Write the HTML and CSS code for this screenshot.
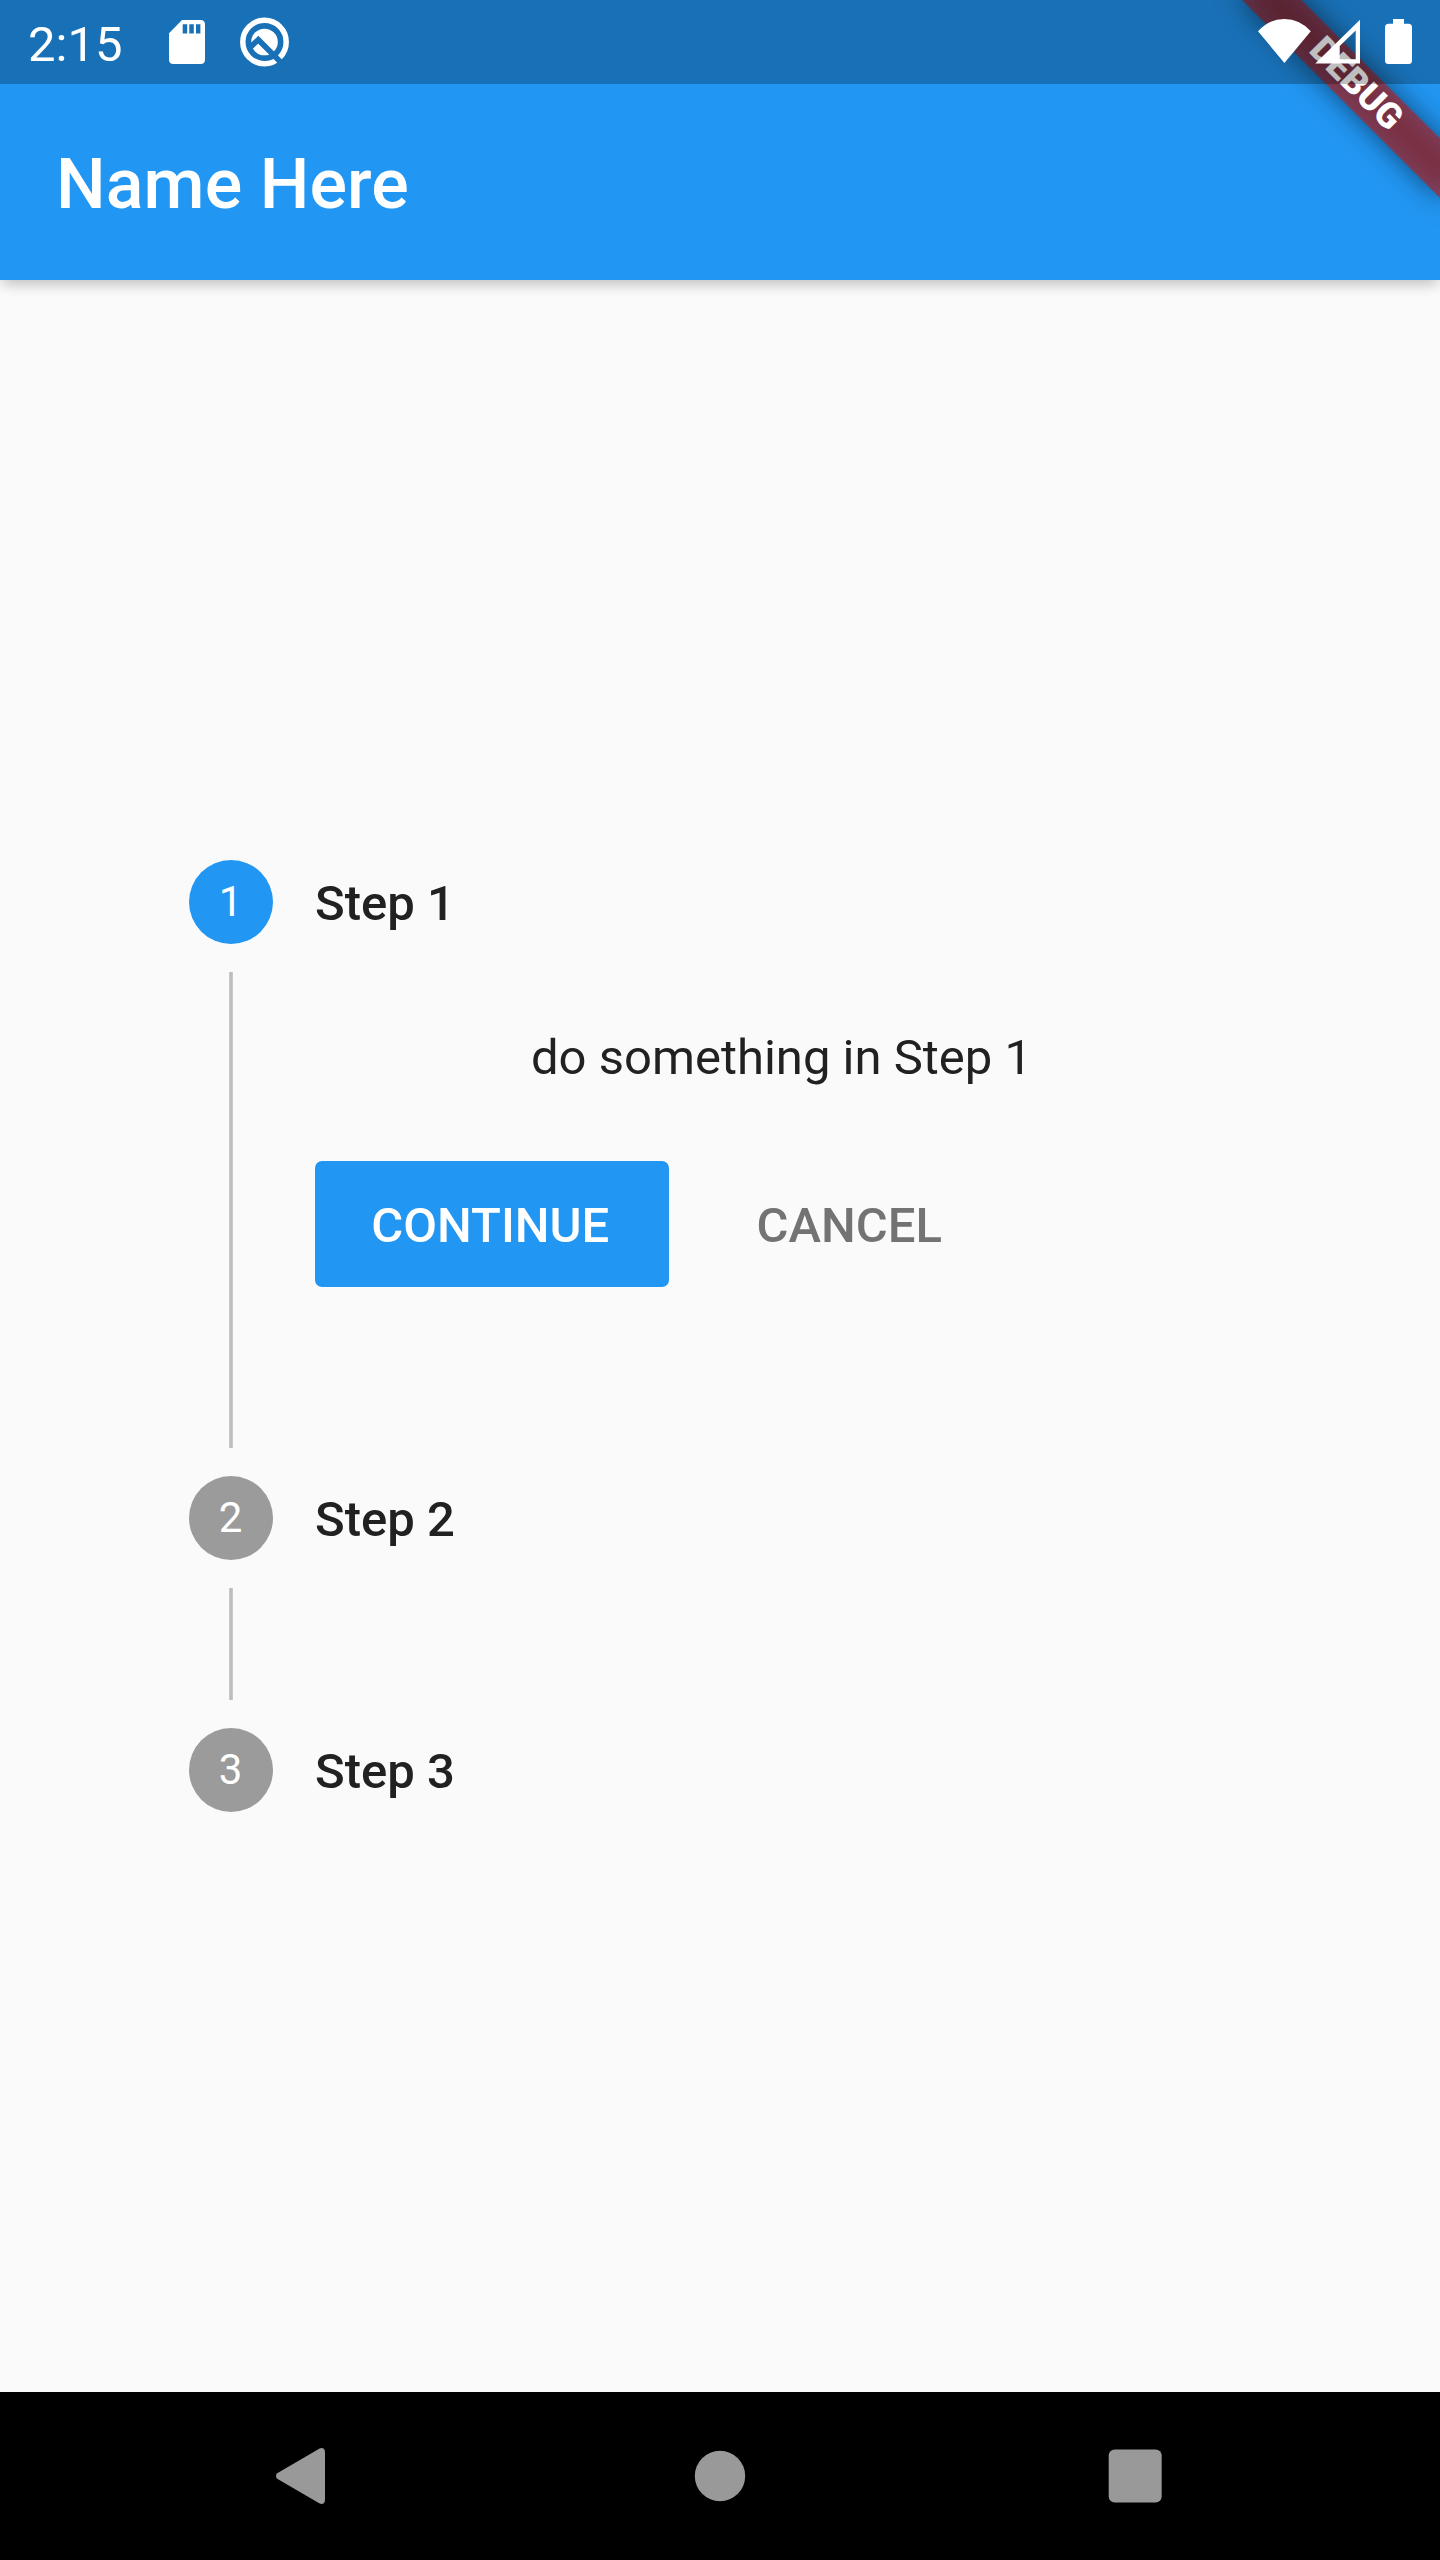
FILE: index.html
```html
<!DOCTYPE html>
<html lang="en">
<head>
<meta charset="utf-8">
<title>Name Here</title>
<link rel="stylesheet" href="styles.css">
</head>
<body>
<div class="screen">
  <div class="status-bar">
    <span class="clock">2:15</span>
    <svg class="icon-sd" width="36" height="44" viewBox="0 0 36 44"><path fill="#fff" fill-rule="evenodd" d="M13 0H31.500Q36 0 36 4.500V39.500Q36 44 31.500 44H4.500Q0 44 0 39.500V13.200ZM13.700 4.200V13.400H18.200V4.200ZM20.300 4.200V13.400H24.800V4.200ZM27 4.200V13.400H31.400V4.200Z"/></svg>
    <svg class="icon-q" width="50" height="50" viewBox="0 0 50 50">
      <circle cx="24.500" cy="25" r="21.700" fill="none" stroke="#fff" stroke-width="5.500"/>
      <circle cx="24.500" cy="25" r="13.300" fill="#fff"/>
      <path d="M10.500 30L18.300 22.700L41.500 46" fill="none" stroke="#1970b6" stroke-width="5.600"/>
    </svg>
    <svg class="icons-right" width="156" height="46" viewBox="0 0 156 46">
      <path fill="#fff" d="M0 12.300Q11 0 26.400 0T52.800 12.300L26.400 44Z"/>
      <path fill="#fff" fill-rule="evenodd" d="M57.300 44.600L102 0.700V44.600ZM81.700 40.300H97.700V11.500L81.700 27Z"/>
      <path fill="#fff" d="M135 0H146V4.700H150.500Q154 4.700 154 8.200V41.500Q154 45 150.500 45H130.500Q127 45 127 41.500V8.200Q127 4.700 130.500 4.700H135Z"/>
    </svg>
  </div>
  <header class="app-bar"><h1 class="title">Name Here</h1></header>
  <div class="banner-clip"><div class="banner"><span class="banner-text">DEBUG</span></div></div>

  <main class="stepper">
    <section class="step">
      <div class="rail"><span class="dot dot-active">1</span><span class="line line-long"></span></div>
      <div class="body">
        <h2 class="step-title">Step 1</h2>
        <p class="step-text">do something in Step 1</p>
        <div class="actions">
          <button class="btn btn-primary">CONTINUE</button>
          <button class="btn btn-flat">CANCEL</button>
        </div>
      </div>
    </section>
    <section class="step">
      <div class="rail"><span class="dot">2</span><span class="line"></span></div>
      <div class="body"><h2 class="step-title">Step 2</h2></div>
    </section>
    <section class="step">
      <div class="rail"><span class="dot">3</span></div>
      <div class="body"><h2 class="step-title">Step 3</h2></div>
    </section>
  </main>

  <nav class="nav-bar">
    <svg class="nav-icon" width="56" height="60" viewBox="0 0 56 60"><path fill="#999" d="M5.200 27.200L47.200 2.700Q49.500 1.500 51.500 2.500Q53 3.500 53 6V54Q53 56.500 51.500 57.500Q49.500 58.500 47.200 57.300L5.200 32.800Q4 31.800 4 30T5.200 27.200Z"/></svg>
    <svg class="nav-icon" width="56" height="60" viewBox="0 0 56 60"><circle cx="30" cy="30" r="25.200" fill="#999"/></svg>
    <svg class="nav-icon" width="56" height="60" viewBox="0 0 56 60"><rect x="1.700" y="3.400" width="53" height="53.200" rx="6" fill="#999"/></svg>
  </nav>
</div>
</body>
</html>
```
FILE: styles.css
```css
* { box-sizing: border-box; }
body { margin: 0; font-family: Roboto, "Noto Sans", sans-serif; }
h1, h2, p { margin: 0; }

.screen {
  position: relative;
  display: flex;
  flex-direction: column;
  width: 1440px;
  height: 2560px;
  overflow: hidden;
  background: #fafafa;
  color: #212121;
}

.status-bar {
  position: relative;
  z-index: 3;
  display: flex;
  align-items: flex-start;
  height: 84px;
  padding-left: 28px;
  color: #fff;
  background: rgba(0, 0, 0, 0.25);
}
.clock { width: 141px; padding-top: 16px; font-size: 49px; line-height: 58px; }
.icon-sd { margin-top: 20px; }
.icon-q { margin: 17px 0 0 35px; }
.icons-right { margin: 19px 26px 0 auto; }

.app-bar {
  z-index: 1;
  display: flex;
  align-items: center;
  height: 280px;
  margin-top: -84px;
  padding: 84px 0 0 56px;
  background: #2196f3;
  box-shadow: 0 6px 14px -3px rgba(0, 0, 0, 0.22), 0 4px 14px rgba(0, 0, 0, 0.06);
}
.title { padding-top: 4px; font-size: 70px; font-weight: 500; line-height: 82px; letter-spacing: 0.1px; color: #fff; }

/* Diagonal ribbon laid over the top-right corner */
.banner-clip {
  position: absolute;
  z-index: 2;
  top: 0;
  right: 0;
  width: 320px;
  height: 320px;
  overflow: hidden;
}
.banner {
  position: absolute;
  top: 98px;
  left: 180px;
  display: flex;
  align-items: center;
  justify-content: center;
  width: 280px;
  height: 42px;
  padding-bottom: 3px;
  transform: rotate(45deg);
  transform-origin: 140px -98px;
}
.banner::before, .banner::after { content: ""; position: absolute; inset: 0; }
.banner::before { background: rgba(0, 0, 0, 0.5); filter: blur(13.9px); }
.banner::after { background: rgba(183, 28, 28, 0.627); }
.banner-text {
  position: relative;
  z-index: 1;
  font-size: 35.7px;
  font-weight: 900;
  line-height: 36px;
  color: #fff;
}

.stepper { flex: 1; padding: 580px 189px 0; }
.step { display: flex; gap: 42px; padding-bottom: 28px; }
.rail { display: flex; flex-direction: column; align-items: center; gap: 28px; }
.dot {
  width: 84px;
  height: 84px;
  padding-right: 1px;
  border-radius: 50%;
  background: #9b9b9b;
  color: #fff;
  font-size: 42px;
  line-height: 84px;
  text-align: center;
}
.dot-active { background: #2196f3; }
.line {
  width: 4px;
  height: 112px;
  background: linear-gradient(90deg, #c9c9c9 1px, #bdbdbd 1px 3px, #c9c9c9 3px);
}
.line-long { height: 476px; }
.body { flex: 1; }
.step-title { height: 84px; padding-top: 3px; font-size: 49px; font-weight: 500; line-height: 82px; }
.step-text { padding: 85px 3px 0 0; font-size: 49px; line-height: 58px; text-align: center; }
.actions { display: flex; gap: 32px; padding-top: 74px; }
.btn {
  height: 126px;
  padding: 4px 56px 0;
  border: 0;
  border-radius: 7px;
  background: none;
  font: 500 49px/58px Roboto, sans-serif;
}
.btn-primary { width: 353.500px; padding-right: 58px; padding-left: 55px; color: #fff; background: #2196f3; }
.btn-flat { color: #737373; }

.nav-bar {
  display: flex;
  justify-content: space-between;
  align-items: center;
  height: 168px;
  padding: 0 277px 0 272px;
  background: #000;
}
```
